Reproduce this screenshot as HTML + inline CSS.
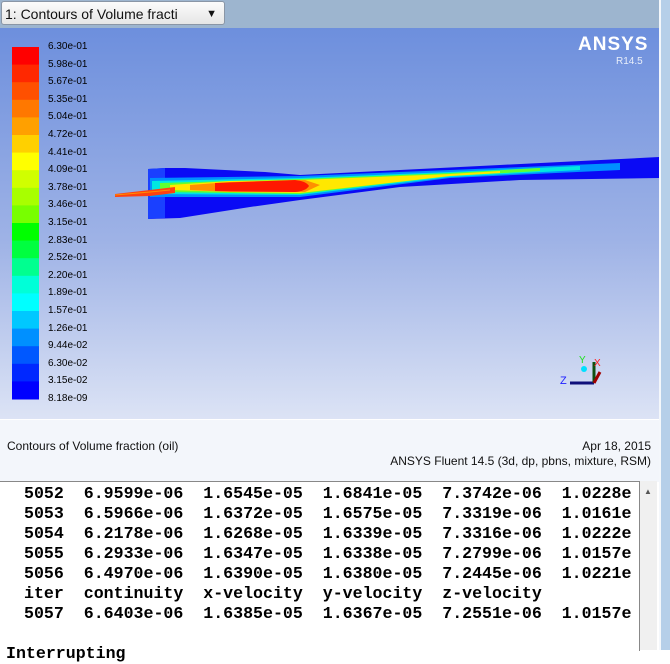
<!DOCTYPE html>
<html><head><style>
body{margin:0;width:670px;height:650px;overflow:hidden;background:#fff;font-family:"Liberation Sans",sans-serif;position:relative}
.abs{position:absolute}
#top{left:0;top:0;width:661px;height:28px;background:#9db5cf}
#dd{left:1px;top:1px;width:224px;height:24px;border:1px solid #8a96a6;border-radius:3px;background:linear-gradient(#fcfcfc,#e6e6e6);font-size:14px;line-height:24px;padding-left:3px;box-sizing:border-box;color:#111}
#gfx{left:0;top:28px;width:659px;height:391px;background:linear-gradient(#6d8fdd,#9fb3e6 55%,#dce3f5)}
#rs{left:661px;top:0;width:9px;height:650px;background:#b6cfe9}
#ws{left:659px;top:0;width:2px;height:650px;background:#f4f7fb}
#foot{left:0;top:419px;width:659px;height:62px;background:#f3f6fb;border-top:1px solid #fff;font-size:12px;color:#111}
.lab{position:absolute;left:48px;font-size:10px;color:#000}
#con{left:0;top:481px;width:639px;height:169px;border-top:1px solid #888;border-right:1px solid #888;background:#fff}
#con pre{margin:0;padding:2px 0 0 24px;font-family:"Liberation Mono",monospace;font-weight:bold;font-size:16.6px;line-height:20px;color:#000}
#sb{left:640px;top:481px;width:17px;height:169px;background:#f0f0f0}
</style></head><body>
<div class="abs" id="top"></div>
<div class="abs" id="dd">1: Contours of Volume fracti<span style="position:absolute;right:7px;top:0;font-size:11px">&#9660;</span></div>
<div class="abs" id="gfx"></div>
<div class="abs" id="ws"></div>
<div class="abs" id="rs"></div>
<div class="abs" style="left:578px;top:34px;color:#fff;font-weight:bold;font-size:19px;letter-spacing:1px">ANSYS</div>
<div class="abs" style="left:616px;top:56px;color:#e8eefa;font-size:10px">R14.5</div>
<svg class="abs" style="left:0;top:0" width="659" height="419">
<g id="bar"></g>
<polygon fill="#0a0af5" points="148,169 165,168 185,168 265,172 300,175 400,170 500,165 660,157 660,178 520,180 400,187 300,200 250,207 180,218 148,219"/>
<polygon fill="#1a40ff" points="148,169 165,168 165,218 148,219"/>
<polygon fill="#0090ff" points="150,178 300,176 450,170 620,163 620,170 450,178 300,197 150,197"/>
<polygon fill="#00e8e0" points="152,181 300,178 450,172 580,166 580,170 450,177 300,195 152,194"/>
<polygon fill="#60ff30" points="160,183 300,179 450,173 540,168 540,171 450,176 300,194 160,192"/>
<polygon fill="#ffe800" points="170,185 230,181 300,180 450,174 500,171 500,173 450,176 300,193 230,192 170,190"/>
<polygon fill="#ff9000" points="190,185 230,182 305,180 320,185 305,192 230,192 190,190"/>
<path d="M215,183 L295,180 Q306,181 309,186 Q306,191 295,192 L215,191 Z" fill="#ff1800"/>
<path d="M115,194 L150,190 L175,187 L175,193 L150,196 L115,197 Z" fill="#ff4010"/>
<path d="M115,195 L150,192 L170,190" stroke="#ff9000" stroke-width="1" fill="none"/>
<g stroke-width="3" fill="none">
<line x1="570" y1="383" x2="594" y2="383" stroke="#10107a"/>
<line x1="594" y1="383" x2="594" y2="362" stroke="#105010"/>
<line x1="594" y1="383" x2="600" y2="372" stroke="#a00000"/>
</g>
<circle cx="584" cy="369" r="3" fill="#00e0ff"/>
<text x="579" y="363" font-size="10" fill="#20e020" font-family="Liberation Sans">Y</text>
<text x="594" y="366" font-size="10" fill="#ff2020" font-family="Liberation Sans">X</text>
<text x="560" y="384" font-size="11" fill="#2020ff" font-family="Liberation Sans">Z</text>
</svg>
<div id="labs"></div>
<div class="abs" id="foot">
<div class="abs" style="left:7px;top:19px">Contours of Volume fraction (oil)</div>
<div class="abs" style="right:8px;top:19px">Apr 18, 2015</div>
<div class="abs" style="right:8px;top:34px">ANSYS Fluent 14.5 (3d, dp, pbns, mixture, RSM)</div>
</div>
<div class="abs" id="con"><pre>5052  6.9599e-06  1.6545e-05  1.6841e-05  7.3742e-06  1.0228e
5053  6.5966e-06  1.6372e-05  1.6575e-05  7.3319e-06  1.0161e
5054  6.2178e-06  1.6268e-05  1.6339e-05  7.3316e-06  1.0222e
5055  6.2933e-06  1.6347e-05  1.6338e-05  7.2799e-06  1.0157e
5056  6.4970e-06  1.6390e-05  1.6380e-05  7.2445e-06  1.0221e
iter  continuity  x-velocity  y-velocity  z-velocity
5057  6.6403e-06  1.6385e-05  1.6367e-05  7.2551e-06  1.0157e
</pre><pre style="padding-left:6px;margin-top:18px">Interrupting</pre></div>
<div class="abs" id="sb"><div style="position:absolute;left:4px;top:6px;font-size:8px;color:#555">&#9650;</div></div>
<script>
var cols=["#ff0000","#ff2800","#ff5000","#ff7800","#ffa000","#ffd000","#ffff00","#d0ff00","#a8ff00","#78ff00","#40ff00","#00ff00","#00ff40","#00ff90","#00ffd8","#00ffff","#00c8ff","#0090ff","#0058ff","#0028ff","#0000ff"];
var g=document.getElementById('bar'),s='';
var labs=["6.30e-01","5.98e-01","5.67e-01","5.35e-01","5.04e-01","4.72e-01","4.41e-01","4.09e-01","3.78e-01","3.46e-01","3.15e-01","2.83e-01","2.52e-01","2.20e-01","1.89e-01","1.57e-01","1.26e-01","9.44e-02","6.30e-02","3.15e-02","8.18e-09"];
var h=352/20;
for(var i=0;i<20;i++){var c=cols[Math.round(i*20/19)];s+='<rect x="12" y="'+(47+i*h)+'" width="27" height="'+(h+0.5)+'" fill="'+c+'"/>';}
g.innerHTML=s;
var L='';for(var i=0;i<21;i++){L+='<div class="lab" style="top:'+(41+i*h)+'px">'+labs[i]+'</div>';}
document.getElementById('labs').innerHTML=L;
</script>
</body></html>
